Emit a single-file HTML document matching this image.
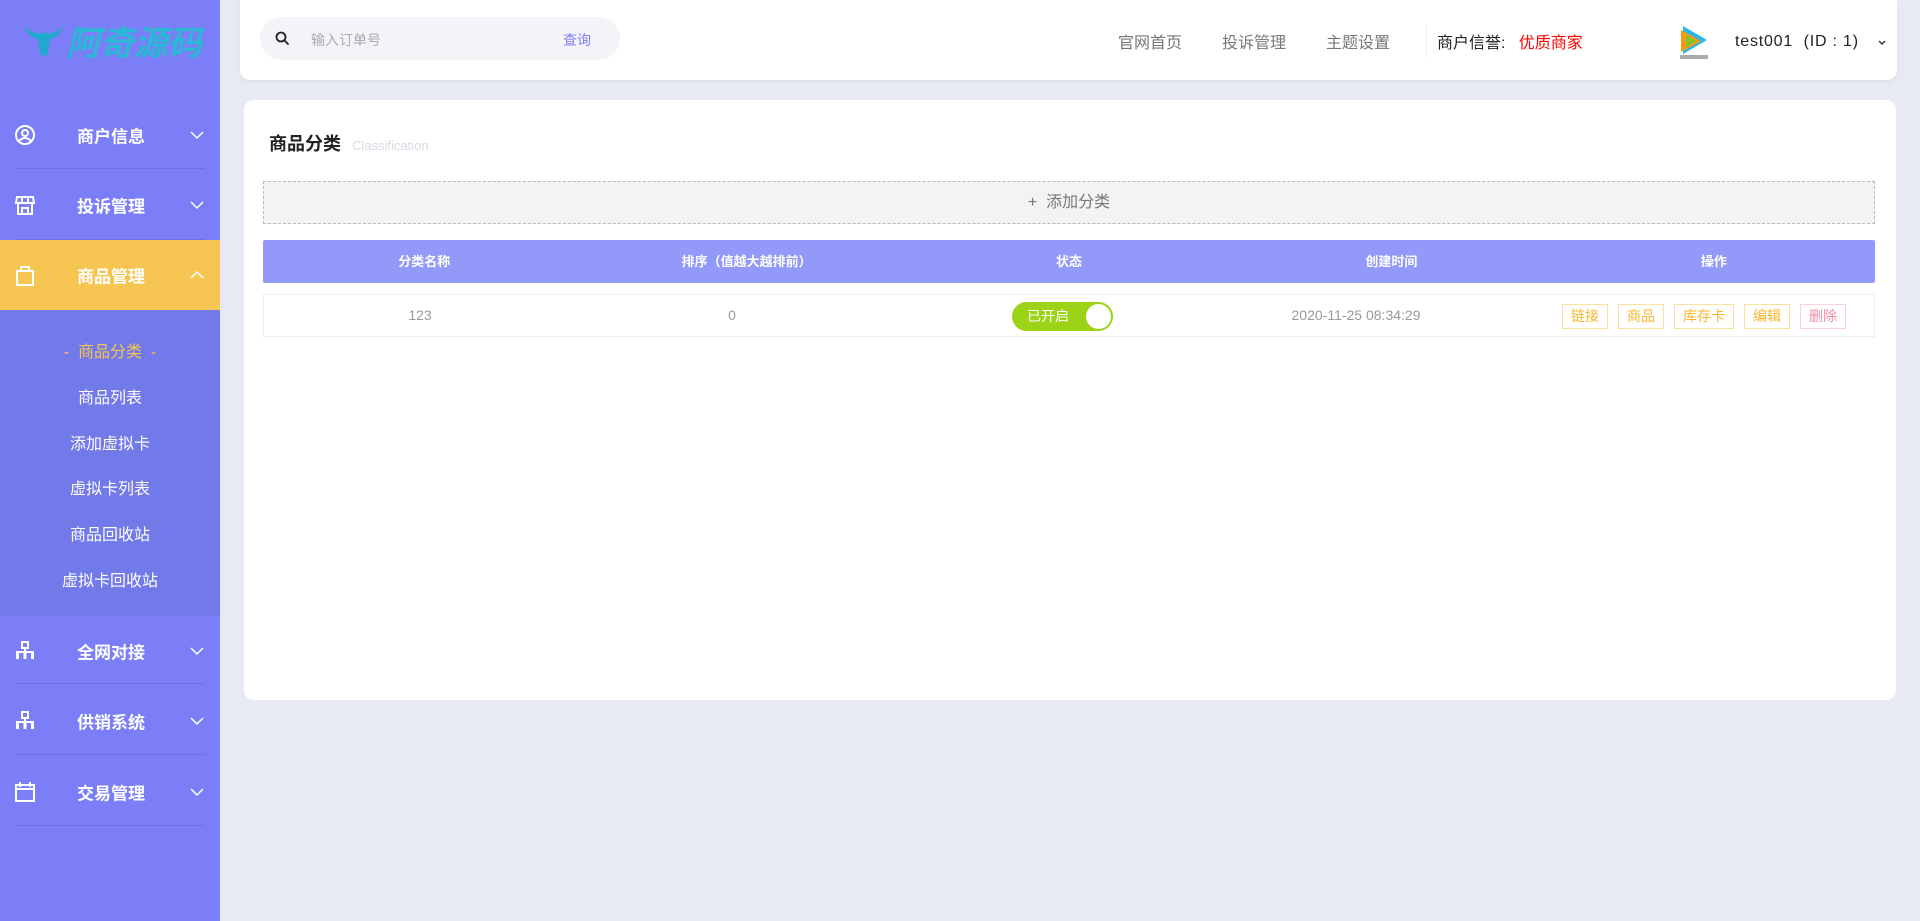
<!DOCTYPE html>
<html><head><meta charset="utf-8"><style>
*{margin:0;padding:0;box-sizing:border-box}
body{width:1920px;height:921px;background:#e8eaf3;font-family:"Liberation Sans","Noto Sans CJK SC",sans-serif;position:relative;overflow:hidden}
.side{position:absolute;left:0;top:0;width:220px;height:921px;background:#7b7ef6}
.logo{position:absolute;left:22px;top:16px;height:50px;width:190px;color:#2bb7d6;font-size:34px;font-weight:bold;font-style:italic;white-space:nowrap}
.mi{position:absolute;left:0;width:220px;height:70px;color:#fff;font-size:17px;font-weight:bold}
.mi .t{position:absolute;left:77px;top:50%;transform:translateY(-50%)}
.mi .ic{position:absolute;left:14px;top:50%;transform:translateY(-50%)}
.mi .ch{position:absolute;left:190px;top:50%;transform:translateY(-50%)}
.sep{position:absolute;left:15px;width:190px;height:1px;background:#6c70e8}
.sub{position:absolute;left:0;top:310px;width:220px;height:306px;background:#7279e8}
.sub div{position:absolute;left:0;width:220px;text-align:center;color:#fff;font-size:16px}
.top{position:absolute;left:240px;top:0;width:1657px;height:80px;background:#fff;border-radius:0 0 10px 10px;box-shadow:0 2px 4px rgba(0,0,0,.05)}
.search{position:absolute;left:20px;top:17px;width:360px;height:43px;background:#f4f4f8;border-radius:22px}
.nav{position:absolute;top:29px;font-size:16px;color:#777}
.card{position:absolute;left:244px;top:100px;width:1652px;height:600px;background:#fff;border-radius:10px}
.btn{display:inline-block;height:25px;line-height:23px;padding:0 8px;border:1px solid #fde0a0;color:#f9b52c;font-size:14px;margin-right:10px;vertical-align:middle}
</style></head><body>
<div class="side">
 <div class="logo"><svg width="44" height="40" style="vertical-align:middle" viewBox="0 0 44 40"><path d="M2 4 Q6 16 16 18 L18 32 Q22 38 26 32 L28 18 Q38 16 42 4 Q36 12 28 12 L16 12 Q8 12 2 4Z" fill="#22aacc"/></svg><span style="vertical-align:middle">阿奇源码</span></div>
 <div class="mi" style="top:100px"><svg class="ic" width="22" height="22" viewBox="0 0 22 22" fill="none" stroke="#fff" stroke-width="2"><circle cx="11" cy="11" r="9"/><circle cx="11" cy="9" r="3"/><path d="M5 17q6-6 12 0"/></svg><span class="t">商户信息</span><svg class="ch" width="14" height="10" viewBox="0 0 14 10" fill="none" stroke="#fff" stroke-width="1.5"><path d="M1 2l6 6 6-6"/></svg></div>
 <div class="sep" style="top:168px"></div>
 <div class="mi" style="top:170px"><svg class="ic" width="22" height="22" viewBox="0 0 22 22" fill="none" stroke="#fff" stroke-width="2"><path d="M3 3h16l1 6H2z M4 9v11h14V9 M8 20v-6h6v6 M8 3v6 M14 3v6"/></svg><span class="t">投诉管理</span><svg class="ch" width="14" height="10" viewBox="0 0 14 10" fill="none" stroke="#fff" stroke-width="1.5"><path d="M1 2l6 6 6-6"/></svg></div>
 <div class="sep" style="top:239px"></div>
 <div class="mi" style="top:240px;background:#f7c552;height:70px"><svg class="ic" width="22" height="22" viewBox="0 0 22 22" fill="none" stroke="#fff" stroke-width="2"><path d="M3 7h16v14H3z M7 7V3h8v4"/></svg><span class="t">商品管理</span><svg class="ch" width="14" height="10" viewBox="0 0 14 10" fill="none" stroke="#fff" stroke-width="1.5"><path d="M1 8l6-6 6 6"/></svg></div>
 <div class="sub">
  <div style="top:28px;color:#f7c552">-&nbsp; 商品分类 &nbsp;-</div>
  <div style="top:74px">商品列表</div>
  <div style="top:120px">添加虚拟卡</div>
  <div style="top:165px">虚拟卡列表</div>
  <div style="top:211px">商品回收站</div>
  <div style="top:257px">虚拟卡回收站</div>
 </div>
 <div class="mi" style="top:616px"><svg class="ic" width="22" height="22" viewBox="0 0 22 22" fill="#fff"><rect x="8" y="2" width="6" height="6" fill="none" stroke="#fff" stroke-width="2"/><rect x="10" y="8" width="2" height="4"/><rect x="2" y="11" width="18" height="2"/><rect x="2" y="12" width="3" height="7"/><rect x="9.5" y="12" width="3" height="7"/><rect x="17" y="12" width="3" height="7"/></svg><span class="t">全网对接</span><svg class="ch" width="14" height="10" viewBox="0 0 14 10" fill="none" stroke="#fff" stroke-width="1.5"><path d="M1 2l6 6 6-6"/></svg></div>
 <div class="sep" style="top:683px"></div>
 <div class="mi" style="top:686px"><svg class="ic" width="22" height="22" viewBox="0 0 22 22" fill="#fff"><rect x="8" y="2" width="6" height="6" fill="none" stroke="#fff" stroke-width="2"/><rect x="10" y="8" width="2" height="4"/><rect x="2" y="11" width="18" height="2"/><rect x="2" y="12" width="3" height="7"/><rect x="9.5" y="12" width="3" height="7"/><rect x="17" y="12" width="3" height="7"/></svg><span class="t">供销系统</span><svg class="ch" width="14" height="10" viewBox="0 0 14 10" fill="none" stroke="#fff" stroke-width="1.5"><path d="M1 2l6 6 6-6"/></svg></div>
 <div class="sep" style="top:754px"></div>
 <div class="mi" style="top:757px"><svg class="ic" width="22" height="22" viewBox="0 0 22 22" fill="none" stroke="#fff" stroke-width="2"><path d="M2 4h18v16H2z M2 8h18 M6 1v5 M16 1v5"/></svg><span class="t">交易管理</span><svg class="ch" width="14" height="10" viewBox="0 0 14 10" fill="none" stroke="#fff" stroke-width="1.5"><path d="M1 2l6 6 6-6"/></svg></div>
 <div class="sep" style="top:825px"></div>
</div>

<div class="top">
 <div class="search">
  <svg style="position:absolute;left:15px;top:14px" width="15" height="15" viewBox="0 0 15 15" fill="none" stroke="#222" stroke-width="1.8"><circle cx="6" cy="6" r="4.5"/><path d="M9.5 9.5l4 4"/></svg>
  <span style="position:absolute;left:51px;top:13px;font-size:14px;color:#aaa">输入订单号</span>
  <span style="position:absolute;left:303px;top:13px;font-size:14px;color:#7b7ef6">查询</span>
 </div>
 <span class="nav" style="left:878px">官网首页</span>
 <span class="nav" style="left:982px">投诉管理</span>
 <span class="nav" style="left:1086px">主题设置</span>
 <div style="position:absolute;left:1186px;top:24px;width:1px;height:34px;background:#eee"></div>
 <span class="nav" style="left:1197px;color:#222">商户信誉: &nbsp;&nbsp;<span style="color:#f00">优质商家</span></span>
 <svg style="position:absolute;left:1437px;top:24px" width="34" height="36" viewBox="0 0 34 36"><path d="M6 2 L30 16 L6 30Z" fill="#2fb4e8"/><path d="M4 6 L24 17 L4 28Z" fill="#f39c12"/><path d="M9 11 L19 17 L9 23Z" fill="#7dc42a"/><rect x="3" y="31" width="28" height="4" fill="#aaa"/></svg>
 <span class="nav" style="left:1495px;top:33px;color:#222;letter-spacing:.8px">test001 &nbsp;(ID : 1)</span>
 <svg style="position:absolute;left:1638px;top:40px" width="8" height="6" viewBox="0 0 8 6" fill="none" stroke="#333" stroke-width="1.4"><path d="M1 1l3 3 3-3"/></svg>
</div>

<div class="card">
 <div style="position:absolute;left:25px;top:30px;font-size:18px;font-weight:bold;color:#222">商品分类 <span style="font-size:13px;font-weight:normal;color:#d8dbe3;margin-left:6px">Classification</span></div>
 <div style="position:absolute;left:19px;top:81px;width:1612px;height:43px;background:#f3f3f3;border:1px dashed #bbb;text-align:center;line-height:41px;font-size:16px;color:#777">+&nbsp; 添加分类</div>
 <div style="position:absolute;left:19px;top:140px;width:1612px;height:43px;background:#9399f8;border-radius:2px;display:flex;color:#fff;font-size:13px;font-weight:bold;line-height:43px;text-align:center">
  <div style="flex:1">分类名称</div><div style="flex:1">排序（值越大越排前）</div><div style="flex:1">状态</div><div style="flex:1">创建时间</div><div style="flex:1">操作</div>
 </div>
 <div style="position:absolute;left:19px;top:194px;width:1612px;height:43px;border:1px solid #eee;display:flex;color:#999;font-size:14px;line-height:41px;text-align:center">
  <div style="flex:1">123</div><div style="flex:1">0</div>
  <div style="flex:1;position:relative"><div style="position:absolute;left:124px;top:7px;width:101px;height:29px;background:#9dd317;border-radius:15px;color:#fff;font-size:14px;line-height:29px;text-align:left;padding-left:15px">已开启<div style="position:absolute;right:2px;top:2px;width:25px;height:25px;border-radius:50%;background:#fff"></div></div></div>
  <div style="flex:1">2020-11-25 08:34:29</div>
  <div style="flex:1;text-align:left;padding-left:50px;white-space:nowrap"><span class="btn">链接</span><span class="btn">商品</span><span class="btn">库存卡</span><span class="btn">编辑</span><span class="btn" style="color:#f78ca0;border-color:#fbd0d8">删除</span></div>
 </div>
</div>
</body></html>
